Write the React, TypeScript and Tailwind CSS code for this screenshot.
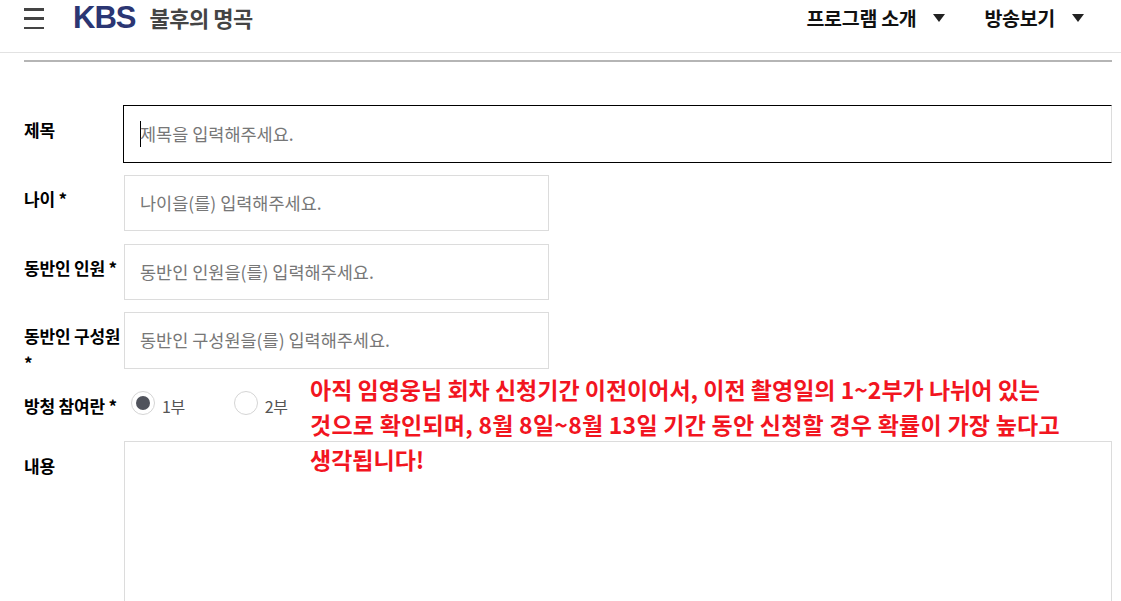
const kr = { fontFamily: '"Noto Sans CJK KR", sans-serif' };

function Caret() {
  return <span className="ml-[17px] inline-block h-0 w-0 border-x-[6.5px] border-t-[8px] border-x-transparent border-t-[#222]" />;
}

function Field({ label, placeholder, className }: { label: string; placeholder: string; className: string }) {
  return (
    <div className={`flex ${className}`}>
      <div className="w-[100px] shrink-0 pt-[10px] text-[17px] font-bold leading-[27px] tracking-[-0.2px] text-black">{label}</div>
      <div className="flex h-full w-[425px] items-center border border-[#dcdcdc] pl-[15px] text-[17.5px] text-[#777]">
        {placeholder}
      </div>
    </div>
  );
}

export default function App() {
  return (
    <div className="relative h-[601px] w-[1121px] overflow-hidden bg-white" style={kr}>
      <header className="flex h-[53px] items-start border-b border-[#e2e2e2]">
        <div className="ml-[24px] mt-[8px] flex h-[21px] w-[20px] flex-col justify-between">
          <span className="h-[2.5px] bg-[#444]" />
          <span className="h-[2.5px] bg-[#444]" />
          <span className="h-[2.5px] bg-[#444]" />
        </div>
        <div className="ml-[29px] mt-[2px] text-[31px] font-bold leading-[32px] tracking-[-1px] text-[#2b3673]" style={{ fontFamily: '"Liberation Sans", sans-serif' }}>KBS</div>
        <div className="ml-[14px] mt-[3px] text-[22px] font-bold leading-[29px] tracking-[-0.5px] text-[#444]">불후의 명곡</div>
        <nav className="ml-auto mt-[3px] flex items-center pr-[37px] text-[19.5px] font-bold leading-[29px] tracking-[-0.3px] text-[#111]">
          <span>프로그램 소개</span>
          <Caret />
          <span className="ml-[39px]">방송보기</span>
          <Caret />
        </nav>
      </header>

      <main className="pl-[24px] pr-[9px] pt-[7px]">
        <div className="h-[2px] bg-[#b5b5b5]" />

        <div className="mt-[43px] flex h-[58px]">
          <div className="w-[99px] shrink-0 pt-[11px] text-[17px] font-bold leading-[27px] tracking-[-0.2px] text-black">제목</div>
          <div className="flex flex-1 items-center border-y border-l border-r border-black border-r-[#dcdcdc] pl-[16px] text-[17.5px] text-[#777]">
            <span className="mr-[-1px] h-[26px] w-px bg-black" />
            제목을 입력해주세요.
          </div>
        </div>

        <Field className="mt-[12px] h-[56px]" label="나이 *" placeholder="나이을(를) 입력해주세요." />
        <Field className="mt-[13px] h-[56px]" label="동반인 인원 *" placeholder="동반인 인원을(를) 입력해주세요." />
        <Field className="mt-[12px] h-[57px]" label="동반인 구성원 *" placeholder="동반인 구성원을(를) 입력해주세요." />

        <div className="mt-[11px] flex h-[61px] items-start">
          <div className="w-[107px] shrink-0 pt-[12px] text-[17px] font-bold leading-[27px] tracking-[-0.2px] text-black">방청 참여란 *</div>
          <span className="mt-[11px] flex h-[24px] w-[24px] items-center justify-center rounded-full border border-[#d5d5d5]">
            <span className="h-[14px] w-[14px] rounded-full bg-[#50535c]" />
          </span>
          <span className="ml-[7px] mt-[13px] text-[16px] leading-[26px] tracking-[-0.4px] text-[#555]">1부</span>
          <span className="ml-[49px] mt-[11px] h-[24px] w-[24px] rounded-full border border-[#d5d5d5]" />
          <span className="ml-[7px] mt-[13px] text-[16px] leading-[26px] tracking-[-0.4px] text-[#555]">2부</span>
        </div>

        <div className="flex">
          <div className="w-[100px] shrink-0 pt-[11px] text-[17px] font-bold leading-[27px] tracking-[-0.2px] text-black">내용</div>
          <div className="h-[200px] flex-1 border border-[#dcdcdc]" />
        </div>
      </main>

      <div className="absolute left-[310px] top-[372px] text-[23px] font-bold leading-[35px] text-[#f2151f]">
        <div>아직 임영웅님 회차 신청기간 이전이어서, 이전 촬영일의 1~2부가 나뉘어 있는</div>
        <div className="tracking-[0.24px]">것으로 확인되며, 8월 8일~8월 13일 기간 동안 신청할 경우 확률이 가장 높다고</div>
        <div>생각됩니다!</div>
      </div>
    </div>
  );
}
